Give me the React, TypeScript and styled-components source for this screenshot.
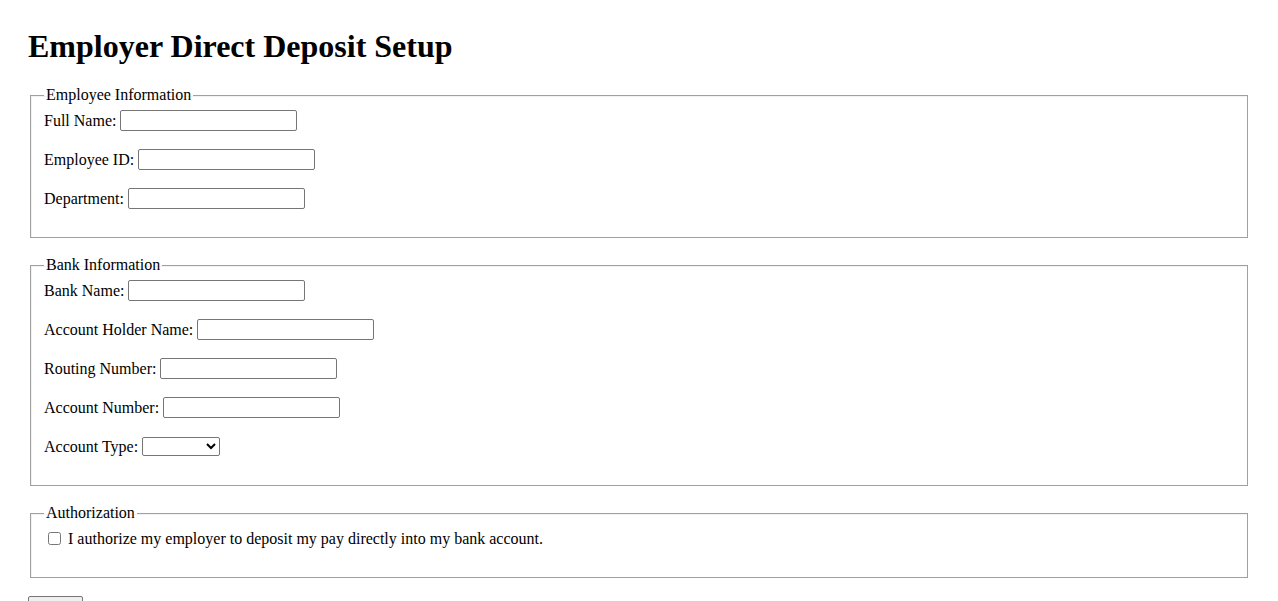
import React from "react";
import styled, { createGlobalStyle } from "styled-components";

const Global = createGlobalStyle`
  html, body { margin: 0; padding: 0; background: #fff; }
  body {
    padding: 28px;
    font-family: "Liberation Serif", "Times New Roman", serif;
    font-size: 16px;
    color: #000;
  }
`;

const Title = styled.h1`
  font-family: "Liberation Serif", "Times New Roman", serif;
  font-size: 32px;
  font-weight: bold;
  margin: 0 0 21px 0;
  line-height: 37px;
`;

const Form = styled.form`
  display: flex;
  flex-direction: column;
  align-items: flex-start;
`;

const Section = styled.fieldset`
  align-self: stretch;
  margin: 0 2px 18px 2px;
  padding: 6px 13px 10px 13px;
  border: 1px solid #a0a0a0;
  box-shadow: inset 1px 1px 0 #f2f2f2;
`;

const Legend = styled.legend`
  padding: 0 2px;
  font-size: 16px;
  line-height: 18px;
`;

const Row = styled.div`
  display: flex;
  align-items: center;
  margin: 0 0 18px 0;
  height: 21px;
`;

const Label = styled.label`
  margin-right: 4px;
`;

const TextInput = styled.input`
  width: 171px;
  height: 17px;
  padding: 1px 2px;
  border: 1px solid #767676;
  border-radius: 2px;
  font-family: "Liberation Sans", Arial, sans-serif;
  font-size: 13.33px;
  margin: 0;
  box-sizing: content-box;
`;

const Select = styled.select`
  width: 78px;
  height: 19px;
  border: 1px solid #767676;
  border-radius: 2px;
  background: #fff;
  font-family: "Liberation Sans", Arial, sans-serif;
  font-size: 13.33px;
  margin: 0;
`;

const Check = styled.input`
  width: 13px;
  height: 13px;
  margin: 0 7px 0 4px;
`;

const CheckRow = styled(Row)`
  margin-top: 0;
  margin-bottom: 18px;
`;

const Submit = styled.button`
  font-family: "Liberation Sans", Arial, sans-serif;
  font-size: 13.33px;
  padding: 1px 6px;
  border: 1px solid #767676;
  border-radius: 2px;
  background: #efefef;
`;

type F = { label: string };
const Field = ({ label }: F) => (
  <Row>
    <Label>{label}</Label>
    <TextInput type="text" />
  </Row>
);

export default function App() {
  return (
    <>
      <Global />
      <Title>Employer Direct Deposit Setup</Title>
      <Form onSubmit={(e) => e.preventDefault()}>
        <Section>
          <Legend>Employee Information</Legend>
          <Field label="Full Name:" />
          <Field label="Employee ID:" />
          <Field label="Department:" />
        </Section>
        <Section>
          <Legend>Bank Information</Legend>
          <Field label="Bank Name:" />
          <Field label="Account Holder Name:" />
          <Field label="Routing Number:" />
          <Field label="Account Number:" />
          <Row>
            <Label>Account Type:</Label>
            <Select>
              <option value=""></option>
              <option>Checking</option>
              <option>Savings</option>
            </Select>
          </Row>
        </Section>
        <Section>
          <Legend>Authorization</Legend>
          <CheckRow>
            <Check type="checkbox" />
            <span>I authorize my employer to deposit my pay directly into my bank account.</span>
          </CheckRow>
        </Section>
        <Submit type="submit">Submit</Submit>
      </Form>
    </>
  );
}
